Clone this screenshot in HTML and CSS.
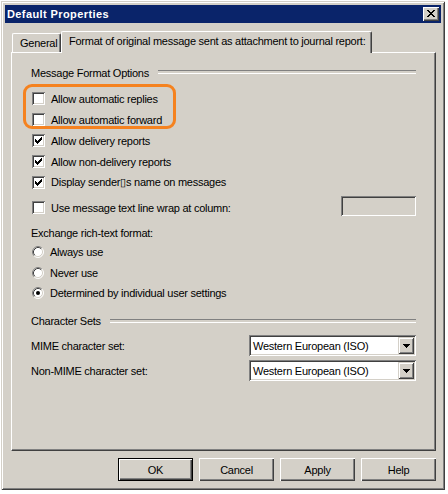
FILE: index.html
```html
<!DOCTYPE html>
<html>
<head>
<meta charset="utf-8">
<link rel="stylesheet" href="styles.css">
</head>
<body>
<div class="dialog">
  <div class="titlebar">
    <span class="title">Default Properties</span>
    <span class="close"><svg width="8" height="7" viewBox="0 0 8 7" shape-rendering="crispEdges"><path fill="#000" d="M0 0h2v1h-2z M6 0h2v1h-2z M1 1h2v1h-2z M5 1h2v1h-2z M2 2h4v1h-4z M3 3h2v1h-2z M2 4h4v1h-4z M1 5h2v1h-2z M5 5h2v1h-2z M0 6h2v1h-2z M6 6h2v1h-2z"/></svg></span>
  </div>
  <div class="tabs">
    <div class="tab">General</div>
    <div class="tab active">Format of original message sent as attachment to journal report:</div>
  </div>
  <div class="panel">
    <div class="group-head">Message Format Options</div>
    <div class="checks">
      <div class="row"><span class="cb"></span><span class="lbl">Allow automatic replies</span></div>
      <div class="row"><span class="cb"></span><span class="lbl">Allow automatic forward</span></div>
      <div class="row"><span class="cb"><svg width="13" height="13" viewBox="0 0 13 13" shape-rendering="crispEdges"><path fill="#000" d="M9 3h1v1h-1z M8 4h2v1h-2z M3 5h1v1h-1z M7 5h3v1h-3z M3 6h2v1h-2z M6 6h3v1h-3z M3 7h5v1h-5z M4 8h3v1h-3z M5 9h1v1h-1z"/></svg></span><span class="lbl">Allow delivery reports</span></div>
      <div class="row"><span class="cb"><svg width="13" height="13" viewBox="0 0 13 13" shape-rendering="crispEdges"><path fill="#000" d="M9 3h1v1h-1z M8 4h2v1h-2z M3 5h1v1h-1z M7 5h3v1h-3z M3 6h2v1h-2z M6 6h3v1h-3z M3 7h5v1h-5z M4 8h3v1h-3z M5 9h1v1h-1z"/></svg></span><span class="lbl">Allow non-delivery reports</span></div>
      <div class="row"><span class="cb"><svg width="13" height="13" viewBox="0 0 13 13" shape-rendering="crispEdges"><path fill="#000" d="M9 3h1v1h-1z M8 4h2v1h-2z M3 5h1v1h-1z M7 5h3v1h-3z M3 6h2v1h-2z M6 6h3v1h-3z M3 7h5v1h-5z M4 8h3v1h-3z M5 9h1v1h-1z"/></svg></span><span class="lbl">Display sender&#x25AF;s name on messages</span></div>
    </div>
    <div class="row wrap-row"><span class="cb"></span><span class="lbl">Use message text line wrap at column:</span><span class="textbox"></span></div>
    <div class="plain-label">Exchange rich-text format:</div>
    <div class="radios">
      <div class="rrow"><span class="radio"><svg width="12" height="12" viewBox="0 0 12 12"><circle cx="6" cy="6" r="5" fill="#fff"/><path d="M2.11 9.89 A5.5 5.5 0 0 1 9.89 2.11" fill="none" stroke="#808080" stroke-width="1"/><path d="M9.89 2.11 A5.5 5.5 0 0 1 2.11 9.89" fill="none" stroke="#fff" stroke-width="1"/><path d="M2.82 9.18 A4.5 4.5 0 0 1 9.18 2.82" fill="none" stroke="#404040" stroke-width="1"/><path d="M9.18 2.82 A4.5 4.5 0 0 1 2.82 9.18" fill="none" stroke="#d4d0c8" stroke-width="1"/></svg></span><span class="lbl">Always use</span></div>
      <div class="rrow"><span class="radio"><svg width="12" height="12" viewBox="0 0 12 12"><circle cx="6" cy="6" r="5" fill="#fff"/><path d="M2.11 9.89 A5.5 5.5 0 0 1 9.89 2.11" fill="none" stroke="#808080" stroke-width="1"/><path d="M9.89 2.11 A5.5 5.5 0 0 1 2.11 9.89" fill="none" stroke="#fff" stroke-width="1"/><path d="M2.82 9.18 A4.5 4.5 0 0 1 9.18 2.82" fill="none" stroke="#404040" stroke-width="1"/><path d="M9.18 2.82 A4.5 4.5 0 0 1 2.82 9.18" fill="none" stroke="#d4d0c8" stroke-width="1"/></svg></span><span class="lbl">Never use</span></div>
      <div class="rrow"><span class="radio"><svg width="12" height="12" viewBox="0 0 12 12"><circle cx="6" cy="6" r="5" fill="#fff"/><path d="M2.11 9.89 A5.5 5.5 0 0 1 9.89 2.11" fill="none" stroke="#808080" stroke-width="1"/><path d="M9.89 2.11 A5.5 5.5 0 0 1 2.11 9.89" fill="none" stroke="#fff" stroke-width="1"/><path d="M2.82 9.18 A4.5 4.5 0 0 1 9.18 2.82" fill="none" stroke="#404040" stroke-width="1"/><path d="M9.18 2.82 A4.5 4.5 0 0 1 2.82 9.18" fill="none" stroke="#d4d0c8" stroke-width="1"/><circle cx="6" cy="6" r="2" fill="#000"/></svg></span><span class="lbl">Determined by individual user settings</span></div>
    </div>
    <div class="group-head charsets">Character Sets</div>
    <div class="srow first"><span>MIME character set:</span><span class="select"><span class="select-text">Western European (ISO)</span><span class="select-btn"><svg width="7" height="4" viewBox="0 0 7 4" shape-rendering="crispEdges"><path fill="#000" d="M0 0h7v1h-7z M1 1h5v1h-5z M2 2h3v1h-3z M3 3h1v1h-1z"/></svg></span></span></div>
    <div class="srow"><span>Non-MIME character set:</span><span class="select"><span class="select-text">Western European (ISO)</span><span class="select-btn"><svg width="7" height="4" viewBox="0 0 7 4" shape-rendering="crispEdges"><path fill="#000" d="M0 0h7v1h-7z M1 1h5v1h-5z M2 2h3v1h-3z M3 3h1v1h-1z"/></svg></span></span></div>
    <div class="highlight"></div>
  </div>
  <div class="buttons">
    <div class="btn default">OK</div>
    <div class="btn">Cancel</div>
    <div class="btn">Apply</div>
    <div class="btn">Help</div>
  </div>
</div>
</body>
</html>
```
FILE: styles.css
```css
* { box-sizing: border-box; }
html, body { margin: 0; padding: 0; }
body {
  background: #fff;
  width: 448px;
  height: 494px;
  overflow: hidden;
  font-family: "Liberation Sans", Arial, sans-serif;
  font-size: 11px;
  letter-spacing: -0.25px;
  color: #000;
}
.dialog {
  margin: 1px 0 0 1px;
  width: 444px;
  height: 489px;
  background: #d4d0c8;
  box-shadow: inset 1px 1px 0 #d4d0c8, inset -1px -1px 0 #404040, inset 2px 2px 0 #fff, inset -2px -2px 0 #808080;
  padding: 4px;
  display: flex;
  flex-direction: column;
}
.titlebar {
  flex: none;
  height: 18px;
  background: #0a246a;
  display: flex;
  align-items: center;
  justify-content: space-between;
  padding: 0 2px 0 2px;
}
.title { color: #fff; font-weight: bold; font-size: 11px; letter-spacing: 0.4px; }
.close {
  width: 16px;
  height: 14px;
  background: #d4d0c8;
  box-shadow: inset 1px 1px 0 #fff, inset -1px -1px 0 #404040, inset -2px -2px 0 #808080;
  display: flex;
  align-items: center;
  justify-content: center;
  padding-bottom: 1px;
}
.close svg { display: block; }
.tabs {
  flex: none;
  display: flex;
  align-items: flex-end;
  height: 22px;
  margin-top: 8px;
  margin-bottom: -1px;
  padding-left: 7px;
  position: relative;
  z-index: 1;
}
.tab {
  height: 19px;
  margin-bottom: 1px;
  width: 49px;
  padding: 0 0 1px 7px;
  display: flex;
  align-items: center;
  background: #d4d0c8;
  border-top: 1px solid #fff;
  border-left: 1px solid #fff;
  border-right: 1px solid #404040;
  box-shadow: inset -1px 0 0 #808080;
  border-top-left-radius: 2px;
  border-top-right-radius: 2px;
  white-space: nowrap;
}
.tab.active {
  height: 22px;
  margin-bottom: 0;
  width: 311px;
  padding-bottom: 3px;
}
.panel {
  flex: none;
  height: 399px;
  margin: 0 5px 0 6px;
  border-top: 1px solid #fff;
  border-left: 1px solid #fff;
  border-right: 1px solid #404040;
  border-bottom: 1px solid #404040;
  box-shadow: inset -1px -1px 0 #808080;
  padding: 9px 19px 0 19px;
  position: relative;
  display: flex;
  flex-direction: column;
}
.group-head {
  display: flex;
  align-items: center;
  height: 21px;
  white-space: nowrap;
}
.group-head::after {
  content: "";
  flex: 1;
  height: 2px;
  border-top: 1px solid #808080;
  border-bottom: 1px solid #fff;
  margin-left: 9px;
  margin-top: -1px;
}
.checks { margin-top: 5px; display: flex; flex-direction: column; }
.row {
  display: flex;
  align-items: center;
  height: 21px;
  white-space: nowrap;
}
.cb {
  flex: none;
  width: 13px;
  height: 13px;
  margin-left: 1px;
  margin-right: 6px;
  background: #fff;
  box-shadow: inset 1px 1px 0 #808080, inset -1px -1px 0 #fff, inset 2px 2px 0 #404040, inset -2px -2px 0 #d4d0c8;
}
.cb svg { display: block; }
.wrap-row { margin-top: 4px; }
.textbox {
  margin-left: auto;
  margin-bottom: 3px;
  width: 75px;
  height: 20px;
  background: #d4d0c8;
  box-shadow: inset 1px 1px 0 #808080, inset -1px -1px 0 #fff, inset 2px 2px 0 #404040, inset -2px -2px 0 #d4d0c8;
}
.plain-label {
  margin-top: 6px;
  height: 18px;
  display: flex;
  align-items: center;
}
.radios { display: flex; flex-direction: column; }
.rrow {
  height: 20.5px;
  display: flex;
  align-items: center;
  white-space: nowrap;
}
.radio {
  flex: none;
  width: 12px;
  height: 12px;
  margin-left: 1px;
  margin-right: 6px;
}
.radio svg { display: block; }
.charsets { margin-top: 7px; }
.srow {
  margin-top: 4px;
  height: 21px;
  display: flex;
  align-items: center;
  justify-content: space-between;
  white-space: nowrap;
}
.srow.first { margin-top: 3.5px; }
.select {
  width: 167px;
  height: 21px;
  background: #fff;
  box-shadow: inset 1px 1px 0 #808080, inset -1px -1px 0 #fff, inset 2px 2px 0 #404040, inset -2px -2px 0 #d4d0c8;
  display: flex;
  align-items: center;
  padding: 2px;
}
.select-text { flex: 1; padding-left: 2px; }
.select-btn {
  flex: none;
  width: 16px;
  height: 17px;
  background: #d4d0c8;
  box-shadow: inset 1px 1px 0 #d4d0c8, inset -1px -1px 0 #404040, inset 2px 2px 0 #fff, inset -2px -2px 0 #808080;
  display: flex;
  align-items: center;
  justify-content: center;
}
.select-btn svg { display: block; }
.highlight {
  position: absolute;
  left: 11px;
  top: 31px;
  width: 153px;
  height: 45px;
  border: 3px solid #f5821f;
  border-radius: 9px;
  pointer-events: none;
}
.buttons {
  flex: none;
  margin-top: 7px;
  display: flex;
  justify-content: flex-end;
  gap: 6px;
  padding-right: 5px;
}
.btn {
  width: 75px;
  height: 23px;
  display: flex;
  align-items: center;
  justify-content: center;
  background: #d4d0c8;
  box-shadow: inset 1px 1px 0 #fff, inset -1px -1px 0 #404040, inset -2px -2px 0 #808080;
}
.btn.default {
  box-shadow: inset 0 0 0 1px #000, inset 2px 2px 0 #fff, inset -2px -2px 0 #404040, inset -3px -3px 0 #808080;
}
```
